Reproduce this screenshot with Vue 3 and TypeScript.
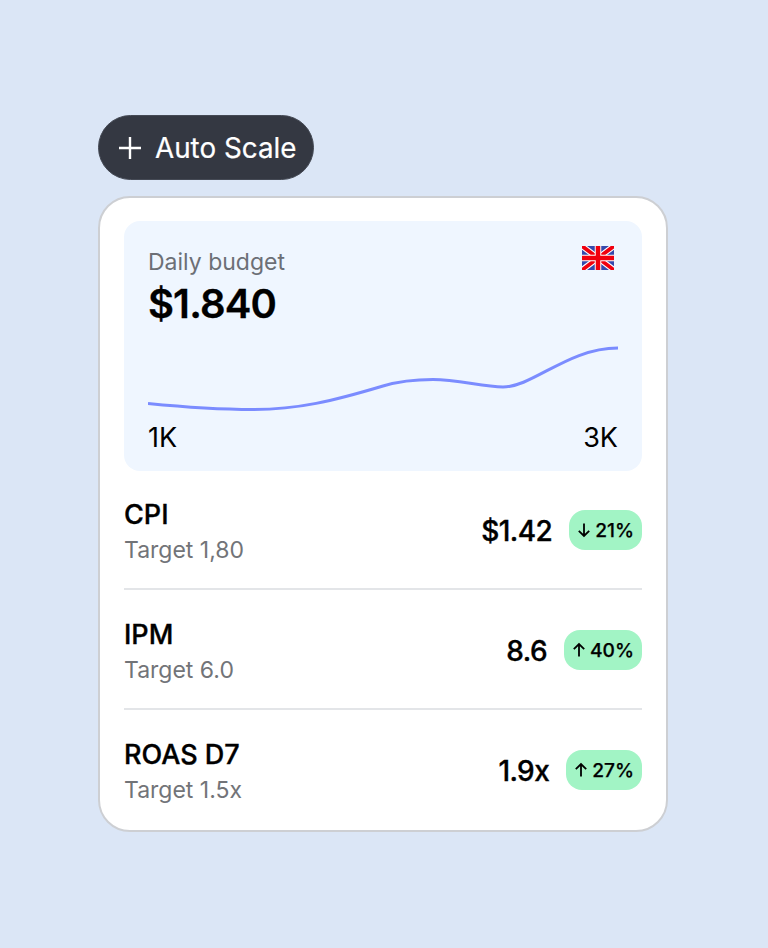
<script setup lang="ts">
type Metric = {
	name: string;
	target: string;
	value: string;
	change: string;
	up: boolean;
};

const metrics: Metric[] = [
	{ name: 'CPI', target: 'Target 1,80', value: '$1.42', change: '21%', up: false },
	{ name: 'IPM', target: 'Target 6.0', value: '8.6', change: '40%', up: true },
	{ name: 'ROAS D7', target: 'Target 1.5x', value: '1.9x', change: '27%', up: true },
];
</script>

<template>
	<div class="page">
		<div class="pill">
			<svg class="pill__icon" width="22" height="22" viewBox="0 0 22 22">
				<path d="M11 0v22M0 11h22" stroke="#fff" stroke-width="2.4" fill="none" />
			</svg>
			<span>Auto Scale</span>
		</div>
		<div class="card">
			<div class="budget">
				<div class="budget__head">
					<div>
						<div class="budget__label">Daily budget</div>
						<div class="budget__amount">$1.840</div>
					</div>
					<svg class="flag" width="32" height="24" viewBox="0 0 32 24">
						<rect width="32" height="24" fill="#3549ad" />
						<path d="M0 0L32 24M32 0L0 24" stroke="#fff" stroke-width="6" />
						<path d="M0 0L32 24M32 0L0 24" stroke="#f0000f" stroke-width="3.8" />
						<path d="M16 0V24M0 12H32" stroke="#fff" stroke-width="6.5" />
						<path d="M16 0V24M0 12H32" stroke="#f0000f" stroke-width="4.5" />
					</svg>
				</div>
				<svg class="curve" width="470" height="70" viewBox="0 0 470 70">
					<path
						d="M0 57.5C35 61 70 63.5 105 63.5C150 63.5 185 55 235 40C255 34 270 33.5 285 33.5C310 33.5 335 41 355 41C385 41 420 2 470 2"
						fill="none"
						stroke="#7b8cff"
						stroke-width="3"
					/>
				</svg>
				<div class="budget__range">
					<span>1K</span>
					<span>3K</span>
				</div>
			</div>
			<ul class="metrics">
				<li v-for="item in metrics" :key="item.name" class="metric">
					<div class="metric__left">
						<div class="metric__name">{{ item.name }}</div>
						<div class="metric__target">{{ item.target }}</div>
					</div>
					<div class="metric__right">
						<span class="metric__value">{{ item.value }}</span>
						<span class="badge">
							<svg width="14" height="16" viewBox="0 0 14 16" :class="{ 'badge__icon--down': !item.up }">
								<path d="M7 14.5V2M1.8 7.2L7 2l5.2 5.2" fill="none" stroke="#000" stroke-width="1.8" />
							</svg>
							{{ item.change }}
						</span>
					</div>
				</li>
			</ul>
		</div>
	</div>
</template>

<style>
body {
	background: #dbe6f6;
}
</style>

<style scoped>
.page {
	box-sizing: border-box;
	height: 948px;
	padding: 115px 0 0 98px;
	background: #dbe6f6;
	font-family: Inter, "Liberation Sans", sans-serif;
	color: #000;
}

.pill {
	display: inline-flex;
	align-items: center;
	gap: 14px;
	box-sizing: border-box;
	height: 65px;
	width: 216px;
	padding-left: 20px;
	border: 1px solid #454a55;
	border-radius: 33px;
	background: #343842;
	color: #fff;
	font-size: 27.8px;
	font-weight: 400;
	line-height: 66px;
	-webkit-text-stroke: 0.2px #fff;
	vertical-align: top;
}

.card {
	box-sizing: border-box;
	width: 570px;
	height: 636px;
	margin-top: 16px;
	padding: 23px 24px 0;
	border: 2px solid #cdcfd3;
	border-radius: 32px;
	background: #fff;
}

.budget {
	box-sizing: border-box;
	height: 250px;
	padding: 25px 24px 0;
	border-radius: 16px;
	background: #eff6ff;
}

.budget__head {
	display: flex;
	justify-content: space-between;
	height: 100px;
}

.budget__label {
	font-size: 23px;
	line-height: 32px;
	color: #6c6f76;
}

.budget__amount {
	margin-top: 2px;
	font-size: 40px;
	line-height: 48px;
	font-weight: 600;
	letter-spacing: -0.9px;
	-webkit-text-stroke: 0.3px #000;
}

.flag {
	display: block;
	margin: 0 4px 0 0;
}

.curve {
	display: block;
}

.budget__range {
	display: flex;
	justify-content: space-between;
	margin-top: 5px;
	font-size: 27px;
	line-height: 34px;
}

.metrics {
	list-style: none;
	margin: -1px 0 0;
	padding: 0;
}

.metric {
	display: flex;
	justify-content: space-between;
	align-items: center;
	box-sizing: border-box;
	height: 120px;
	padding-top: 2px;
	border-bottom: 2px solid #e3e5e8;
}

.metric:last-child {
	border-bottom-color: transparent;
}

.metric__left {
	padding-top: 3px;
}

.metric__name {
	font-size: 27px;
	line-height: 34px;
	font-weight: 500;
	-webkit-text-stroke: 0.35px #000;
}

.metric__target {
	margin-top: 3px;
	font-size: 23px;
	line-height: 30px;
	color: #727478;
}

.metric__right {
	display: flex;
	align-items: center;
	gap: 17px;
}

.metric__value {
	padding-top: 2px;
	font-size: 28px;
	font-weight: 500;
	letter-spacing: -0.6px;
	-webkit-text-stroke: 0.35px #000;
}

.badge {
	display: inline-flex;
	align-items: center;
	gap: 4px;
	height: 40px;
	padding: 0 8px;
	border-radius: 16px;
	background: #a2f4c5;
	font-size: 19.2px;
	font-weight: 500;
	-webkit-text-stroke: 0.25px #000;
}

.badge__icon--down {
	transform: rotate(180deg);
}
</style>
